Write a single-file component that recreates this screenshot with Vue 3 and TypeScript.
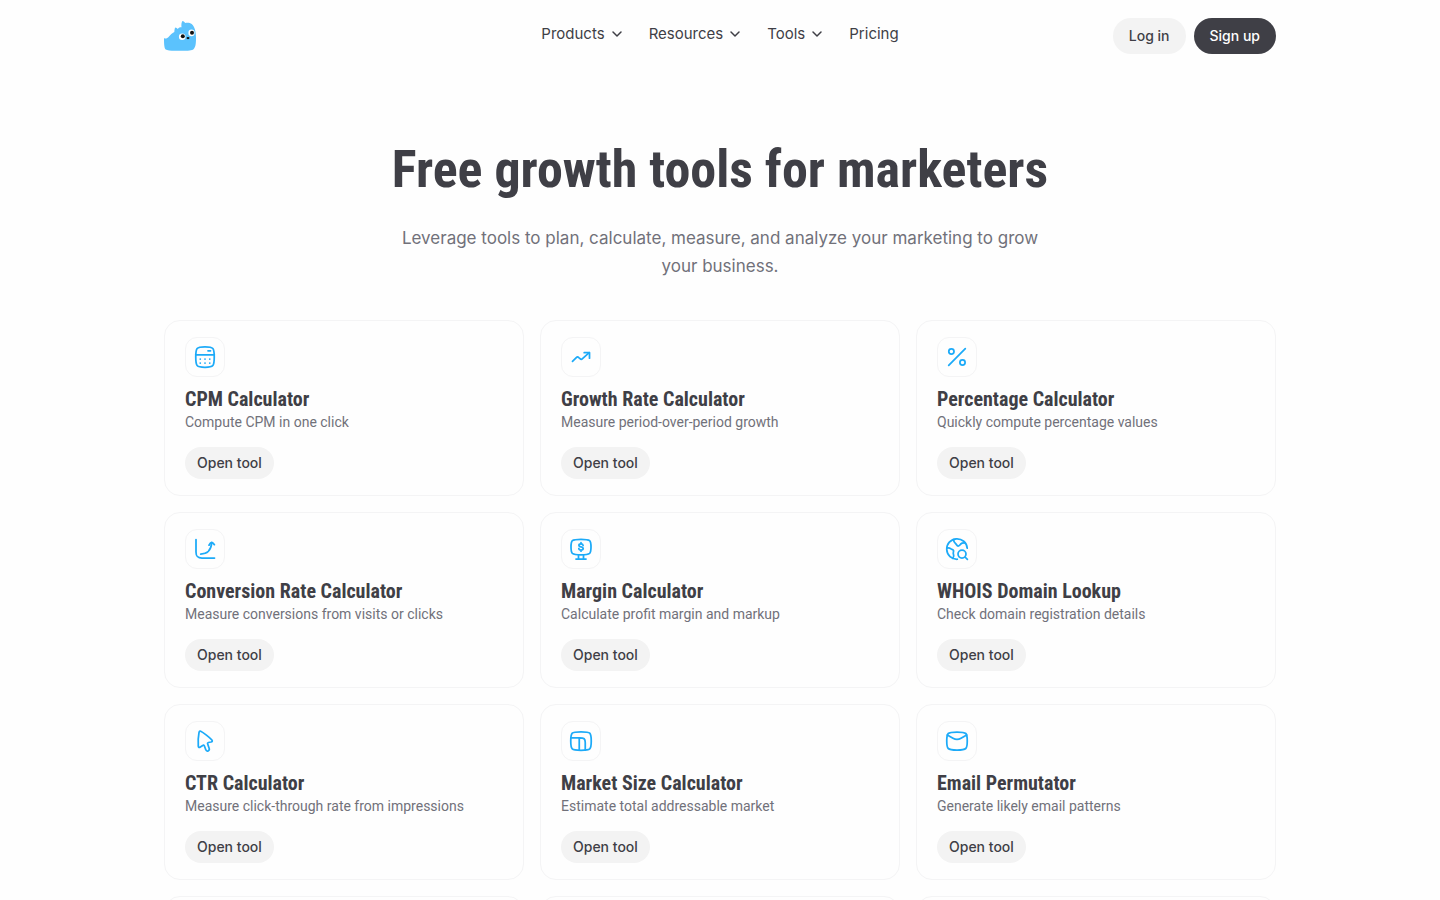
<script setup lang="ts">
interface NavItem {
  label: string
  menu: boolean
}

interface Tool {
  title: string
  description: string
  paths: string[]
}

const nav: NavItem[] = [
  { label: 'Products', menu: true },
  { label: 'Resources', menu: true },
  { label: 'Tools', menu: true },
  { label: 'Pricing', menu: false },
]

const tools: Tool[] = [
  {
    title: 'CPM Calculator',
    description: 'Compute CPM in one click',
    paths: [
      'M2.75 12c0-4.6.2-7 1.4-8.5C5.300 2.100 7.500 1.750 12 1.750s6.700.35 7.850 1.750c1.200 1.500 1.400 3.900 1.400 8.500s-.2 7-1.400 8.500C18.700 21.900 16.500 22.250 12 22.250s-6.700-.35-7.850-1.750C2.950 19 2.750 16.600 2.750 12Z',
      'M2.75 9.750h18.500M15 5.750h2.500',
      'M7.250 14h.01M12 14h.01M16.750 14h.01M7.250 18h.01M12 18h.01M16.750 18h.01',
    ],
  },
  {
    title: 'Growth Rate Calculator',
    description: 'Measure period-over-period growth',
    paths: ['M3.500 16.300 7.300 12.600c.9-.9 1.600-.9 2.500 0l1.200 1.100c.9.9 1.600.9 2.500 0l6.700-6', 'M15.200 7.700h5.300v5.500'],
  },
  {
    title: 'Percentage Calculator',
    description: 'Quickly compute percentage values',
    paths: ['M3.700 20.300 20.300 3.700', 'M9 6.400a2.600 2.600 0 1 1-5.200 0 2.600 2.600 0 0 1 5.200 0Z', 'M20.100 17.500a2.600 2.600 0 1 1-5.200 0 2.600 2.600 0 0 1 5.200 0Z'],
  },
  {
    title: 'Conversion Rate Calculator',
    description: 'Measure conversions from visits or clicks',
    paths: ['M3 2.500v12.500c0 4.500 1.500 6 6 6h12.500', 'M7.700 17c6.500 0 10.300-3.500 11-11', 'M16 8.200c.9-1.500 1.700-2.400 2.700-2.800.8.300 1.800 1 2.700 2.300'],
  },
  {
    title: 'Margin Calculator',
    description: 'Calculate profit margin and markup',
    paths: [
      'M2 10c0-3.600.2-5.300 1.400-6.400C4.700 2.500 7 2.250 12 2.250s7.300.25 8.600 1.350C21.800 4.700 22 6.400 22 10s-.2 5.200-1.400 6.300c-1.300 1.100-3.600 1.450-8.600 1.450s-7.300-.35-8.600-1.450C2.200 15.200 2 13.600 2 10Z',
      'M9.500 18v4M14.500 18v4M7 22h10',
      'M14.100 8.300c-.2-1-1-1.400-2.100-1.400s-2.100.5-2.100 1.500 1 1.300 2.100 1.500c1.200.2 2.200.6 2.200 1.600s-1 1.500-2.200 1.500-2.100-.5-2.200-1.500M12 5.700v1.200M12 13v1.200',
    ],
  },
  {
    title: 'WHOIS Domain Lookup',
    description: 'Check domain registration details',
    paths: [
      'M22.200 11.200A10.250 10.250 0 1 0 12.300 22.250',
      'M8.500 2.600c.2 2.500 1 3.200 2.200 4.100 1 .8 1 2.300 2.400 2.300 1.600 0 1.800-.8 2.800-2.100.9-1.100 2.500-.9 4.200-1',
      'M1.800 11.100c1.500-.3 3.200.1 4.100.8.8.6 2.300.3 2.600 1.600.3 1.400-.8 2.500 0 4 .7 1.300.2 2.500-.7 3.700',
      'M21 17.100a4 4 0 1 1-8 0 4 4 0 0 1 8 0ZM20 20l2.400 2.400',
    ],
  },
  {
    title: 'CTR Calculator',
    description: 'Measure click-through rate from impressions',
    paths: ['M7.700 2.300c2.300 1 9.200 6.300 11.200 8.700.8 1 .3 1.700-.9 2l-2.600.5c-.8.200-1 .7-.7 1.500l1.500 4.600c.3 1.100.1 1.900-1 2.300-1.300.4-2 0-2.400-1.100l-1.500-4c-.3-.8-.9-1-1.600-.4L7.300 18c-1.100.8-1.900.5-2-.9-.2-3.200 0-10 .7-13.500.3-1.300.8-1.700 1.700-1.300Z'],
  },
  {
    title: 'Market Size Calculator',
    description: 'Estimate total addressable market',
    paths: [
      'M1.750 12c0-4.300.2-6.600 1.500-7.900C4.500 2.900 7 2.750 12 2.750s7.500.15 8.750 1.350c1.300 1.300 1.500 3.600 1.500 7.900s-.2 6.600-1.500 7.900C19.500 21.100 17 21.250 12 21.250s-7.500-.15-8.750-1.350C1.950 18.600 1.750 16.300 1.750 12Z',
      'M2 8.750h9c4 0 5.250 1 5.250 5V21M10.250 8.750V21',
    ],
  },
  {
    title: 'Email Permutator',
    description: 'Generate likely email patterns',
    paths: [
      'M1.750 12c0-4.200.2-6.300 1.500-7.500C4.500 3.300 7 3 12 3s7.500.3 8.750 1.500c1.300 1.200 1.500 3.300 1.500 7.500s-.2 6.300-1.500 7.500C19.500 20.700 17 21 12 21s-7.500-.3-8.750-1.500C1.950 18.300 1.750 16.200 1.750 12Z',
      'm2.300 6 5.700 3.300c3.200 1.900 4.800 1.900 8 0L21.700 6',
    ],
  },
]

const pendingCards = 3
</script>

<template>
  <div class="page">
    <header class="header">
      <a class="brand" href="#" aria-label="Home">
        <svg width="32" height="30" viewBox="0 0 32 30" aria-hidden="true">
          <path
            fill="#5bc2fd"
            d="M0 17c1.500 1 3 .6 5-1.500C6.500 14 8 12 10.300 11c.2-2 .3-3.500 1-4.500 1 .1 1.800.8 2.500 1.400.8-1.200 2-1.800 3.700-1.600-.3-2.500-.1-4.800.9-6.300 1.300.3 2.200 1.200 3 2 2-.6 4.600-.3 6.300 1 2.800 2.200 4.300 7.500 4.300 13.500 0 4.500 0 9.500-2.500 11.700C28 29.700 25 29.600 16 29.700c-8 .1-12.500.1-14.300-1.200C0 27.200 0 21 0 17Z"
          />
          <ellipse cx="18.200" cy="15.800" rx="3.300" ry="3.200" fill="#fff" />
          <ellipse cx="27.500" cy="11.900" rx="3.100" ry="3.300" fill="#fff" />
          <circle cx="18.800" cy="15.200" r="2" fill="#111" />
          <circle cx="28" cy="11.700" r="2" fill="#111" />
          <ellipse cx="24" cy="17.100" rx="1.500" ry="1.100" fill="#111" />
        </svg>
      </a>
      <nav class="nav" aria-label="Main">
        <template v-for="item in nav" :key="item.label">
          <button v-if="item.menu" class="nav-item" type="button" aria-haspopup="true">
            {{ item.label }}
            <svg class="chevron" width="12" height="12" viewBox="0 0 12 12" aria-hidden="true">
              <path d="m2 4 4 4 4-4" />
            </svg>
          </button>
          <a v-else class="nav-item" href="#">{{ item.label }}</a>
        </template>
      </nav>
      <div class="account">
        <a class="pill light" href="#">Log in</a>
        <a class="pill dark" href="#">Sign up</a>
      </div>
    </header>

    <main>
      <section class="hero">
        <h1>Free growth tools for marketers</h1>
        <p>Leverage tools to plan, calculate, measure, and analyze your marketing to grow your business.</p>
      </section>

      <section class="grid">
        <article v-for="tool in tools" :key="tool.title" class="card">
          <span class="icon">
            <svg width="24" height="24" viewBox="0 0 24 24" aria-hidden="true">
              <path v-for="d in tool.paths" :key="d" :d="d" />
            </svg>
          </span>
          <h2>{{ tool.title }}</h2>
          <p>{{ tool.description }}</p>
          <a class="open" href="#">Open tool</a>
        </article>
        <article v-for="n in pendingCards" :key="n" class="card" />
      </section>
    </main>
  </div>
</template>

<style>
body {
  margin: 0;
  background: #fefefe;
}
</style>

<style scoped>
.page {
  box-sizing: border-box;
  max-width: 1160px;
  margin: 0 auto;
  padding: 0 24px;
  font-family: Inter, "Liberation Sans", sans-serif;
  color: #3f3f46;
}

a {
  color: inherit;
  text-decoration: none;
}

.header {
  display: grid;
  grid-template-columns: 1fr auto 1fr;
  align-items: center;
  height: 72px;
}

.brand {
  display: flex;
}

.nav {
  display: flex;
  gap: 26px;
  padding-bottom: 4px;
}

.nav-item {
  display: flex;
  align-items: center;
  gap: 6px;
  padding: 0;
  border: 0;
  background: none;
  color: inherit;
  font: inherit;
  font-size: 15px;
  line-height: 24px;
  cursor: pointer;
}

.chevron path {
  fill: none;
  stroke: currentColor;
  stroke-width: 1.5;
  stroke-linecap: round;
  stroke-linejoin: round;
}

.account {
  display: flex;
  justify-content: flex-end;
  gap: 8px;
}

.pill {
  padding: 0 16px;
  border-radius: 18px;
  font-size: 14px;
  font-weight: 500;
  line-height: 36px;
}

.light {
  background: #f3f3f3;
}

.dark {
  background: #3f3f46;
  color: #fefefe;
}

.hero {
  max-width: 664px;
  margin: 0 auto;
  padding: 64px 0 40px;
  text-align: center;
}

h1 {
  margin: 0 0 20px;
  font-family: "Liberation Sans Narrow", "Roboto Condensed", "Liberation Sans", sans-serif;
  font-size: 52px;
  font-weight: 700;
  line-height: 68px;
}

.hero p {
  margin: 0;
  color: #71717a;
  font-size: 17px;
  line-height: 28px;
}

.grid {
  display: grid;
  grid-template-columns: repeat(3, 1fr);
  gap: 16px;
}

.card {
  display: flex;
  flex-direction: column;
  align-items: flex-start;
  box-sizing: border-box;
  min-height: 176px;
  padding: 16px 20px;
  border: 1px solid #f4f4f5;
  border-radius: 16px;
}

.icon {
  display: grid;
  place-items: center;
  box-sizing: border-box;
  width: 40px;
  height: 40px;
  border: 1px solid #f4f4f5;
  border-radius: 12px;
}

.icon path {
  fill: none;
  stroke: #1caaf8;
  stroke-width: 1.75;
  stroke-linecap: round;
  stroke-linejoin: round;
}

h2 {
  margin: 8px 0 0;
  font-family: "Liberation Sans Narrow", "Roboto Condensed", "Liberation Sans", sans-serif;
  font-size: 20px;
  font-weight: 700;
  line-height: 28px;
}

.card p {
  margin: 0 0 16px;
  color: #71717a;
  font-family: Roboto, "Liberation Sans", sans-serif;
  font-size: 14px;
  line-height: 18px;
}

.open {
  padding: 0 12px;
  border-radius: 16px;
  background: #f3f3f3;
  font-size: 14px;
  font-weight: 500;
  line-height: 32px;
}
</style>
